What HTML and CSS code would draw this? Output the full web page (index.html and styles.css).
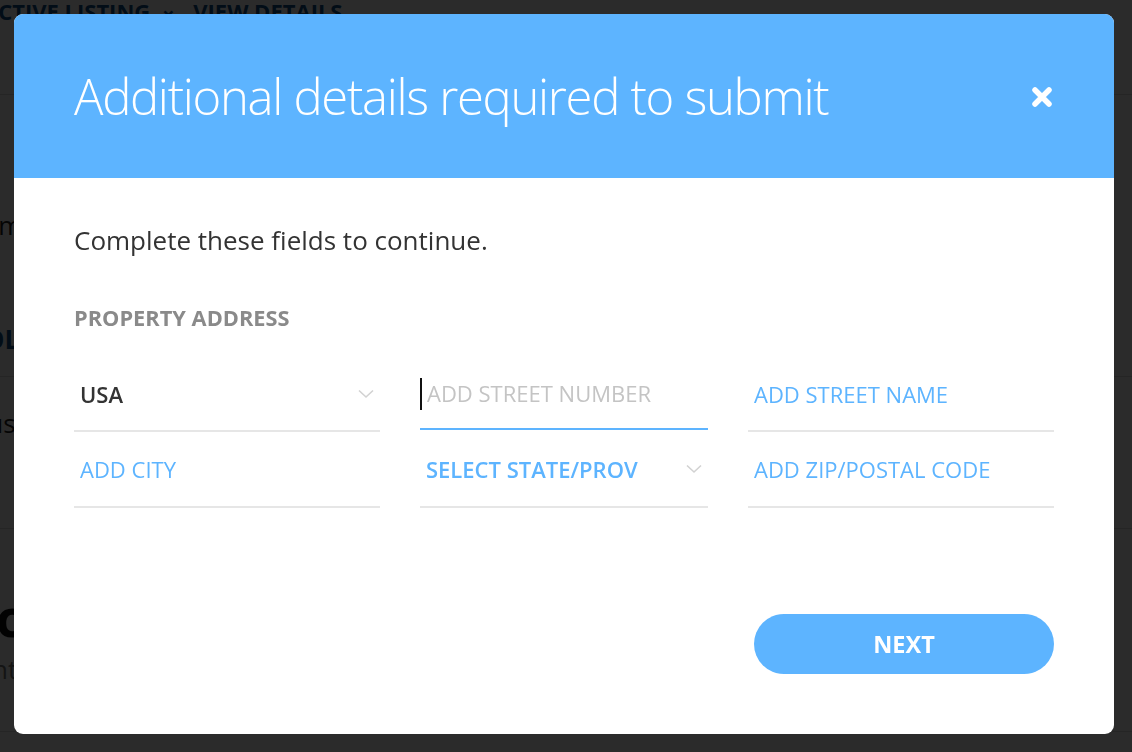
FILE: index.html
```html
<!DOCTYPE html>
<html lang="en">
<head>
<meta charset="utf-8">
<title>Additional details required to submit</title>
<link rel="stylesheet" href="styles.css">
</head>
<body>
<div class="page">
  <div class="page-top">
    <span class="crumb">ACTIVE LISTING</span>
    <span class="crumb-caret">&#8964;</span>
    <span class="crumb">VIEW DETAILS</span>
  </div>
  <div class="page-section s1">
    <p class="page-text">Information</p>
    <p class="page-link">TOOLS</p>
  </div>
  <div class="page-section s2">
    <p class="page-text">Status</p>
  </div>
  <div class="page-section s3">
    <p class="page-big">Account</p>
    <p class="page-sub">Content</p>
  </div>
</div>

<div class="overlay">
  <div class="modal" role="dialog" aria-labelledby="modal-title">
    <header class="modal-head">
      <h1 id="modal-title" class="modal-title">Additional details required to submit</h1>
      <button class="close" aria-label="Close">
        <svg width="24" height="24" viewBox="0 0 24 24" aria-hidden="true">
          <path d="M5 5 L19 19 M19 5 L5 19" stroke="#fff" stroke-width="5.5" stroke-linecap="round" fill="none"/>
        </svg>
      </button>
    </header>
    <div class="modal-body">
      <p class="intro">Complete these fields to continue.</p>
      <h2 class="section-label">PROPERTY ADDRESS</h2>
      <div class="fields">
        <div class="field select">
          <span class="value">USA</span>
          <svg class="chev" width="16" height="10" viewBox="0 0 16 10" aria-hidden="true"><path d="M1 1.5 L8 8 L15 1.5" stroke="#d2d2d2" stroke-width="1.6" fill="none"/></svg>
        </div>
        <div class="field active">
          <span class="caret"></span>
          <span class="placeholder">ADD STREET NUMBER</span>
        </div>
        <div class="field">
          <span class="hint">ADD STREET NAME</span>
        </div>
        <div class="field">
          <span class="hint">ADD CITY</span>
        </div>
        <div class="field select">
          <span class="hint strong">SELECT STATE/PROV</span>
          <svg class="chev" width="16" height="10" viewBox="0 0 16 10" aria-hidden="true"><path d="M1 1.5 L8 8 L15 1.5" stroke="#d2d2d2" stroke-width="1.6" fill="none"/></svg>
        </div>
        <div class="field">
          <span class="hint">ADD ZIP/POSTAL CODE</span>
        </div>
      </div>
      <div class="actions">
        <button class="next">NEXT</button>
      </div>
    </div>
  </div>
</div>
</body>
</html>
```

FILE: styles.css
```css
* { box-sizing: border-box; }

html, body {
  margin: 0;
  padding: 0;
  height: 100%;
}

body {
  font-family: "Open Sans", "Liberation Sans", sans-serif;
  background: #ffffff;
  overflow: hidden;
}

/* ---------- underlying page ---------- */
.page {
  width: 100%;
  height: 100%;
}

.page-top {
  height: 101px;
  border-bottom: 1px solid #d8d8d8;
  display: flex;
  align-items: flex-start;
  gap: 10px;
  margin-left: -17px;
  margin-top: -6px;
  color: #0e4d86;
  font-weight: 700;
  font-size: 22px;
  line-height: 34px;
}

.crumb-caret { font-size: 20px; line-height: 30px; margin-right: 6px; }

.page-section {
  border-bottom: 1px solid #d8d8d8;
  margin: 0;
}

.s1 { height: 282px; padding-top: 112px; }
.s2 { height: 152px; padding-top: 28px; }
.s3 { height: 203px; padding-top: 58px; }

.page-text {
  margin: 0 0 0 -60px;
  font-size: 26px;
  color: #222;
}

.page-link {
  margin: 78px 0 0 -52px;
  font-size: 26px;
  font-weight: 700;
  color: #0e4d86;
}

.page-big {
  margin: 0 0 0 -40px;
  font-size: 52px;
  line-height: 60px;
  font-weight: 700;
  color: #111;
}

.page-sub {
  margin: 4px 0 0 -40px;
  font-size: 26px;
  color: #777;
}

/* ---------- overlay & modal ---------- */
.overlay {
  position: fixed;
  inset: 0;
  background: rgba(0, 0, 0, 0.83);
  padding: 14px 18px 18px 14px;
}

.modal {
  width: 1100px;
  height: 720px;
  background: #ffffff;
  border-radius: 9px;
  overflow: hidden;
  display: flex;
  flex-direction: column;
}

.modal-head {
  background: #5db4ff;
  height: 164px;
  display: flex;
  align-items: center;
  justify-content: space-between;
  padding: 0 60px 0 60px;
}

.modal-title {
  margin: 0;
  color: #ffffff;
  font-family: "Open Sans", "Liberation Sans", sans-serif;
  font-weight: 350;
  font-size: 49px;
  letter-spacing: -1.3px;
  line-height: 60px;
}

.close {
  background: none;
  border: 0;
  padding: 0;
  width: 24px;
  height: 24px;
  cursor: pointer;
  margin-top: 2px;
}

.close svg { display: block; }

.modal-body {
  flex: 1;
  padding: 45px 60px 0 60px;
}

.intro {
  margin: 0;
  font-size: 26px;
  line-height: 34px;
  color: #333333;
}

.section-label {
  margin: 47px 0 0 0;
  font-size: 21.8px;
  line-height: 28px;
  font-weight: 700;
  color: #8a8a8a;
}

.fields {
  margin-top: 26px;
  display: grid;
  grid-template-columns: 306px 288px 306px;
  column-gap: 40px;
}

.field {
  height: 76px;
  border-bottom: 2px solid #e6e6e6;
  display: flex;
  align-items: center;
  padding: 0 6px 0 6px;
  position: relative;
  font-size: 22px;
}

.field:nth-child(-n+3) { height: 74px; }

.field.active { border-bottom-color: #5db4ff; height: 72px; margin-bottom: 2px; padding-left: 7px; }

.field.select { justify-content: space-between; }

.value { color: #333333; font-weight: 600; }

.hint { color: #5db4ff; }
.hint.strong { font-weight: 600; }

.placeholder { color: #c4c4c4; }

.caret {
  position: absolute;
  left: 0;
  top: 20px;
  width: 2px;
  height: 32px;
  background: #111;
}

.actions {
  display: flex;
  justify-content: flex-end;
  margin-top: 106px;
}

.next {
  width: 300px;
  height: 60px;
  border: 0;
  border-radius: 30px;
  background: #5db4ff;
  color: #ffffff;
  font-family: "Open Sans", "Liberation Sans", sans-serif;
  font-size: 23.5px;
  font-weight: 700;
  cursor: pointer;
}
```
